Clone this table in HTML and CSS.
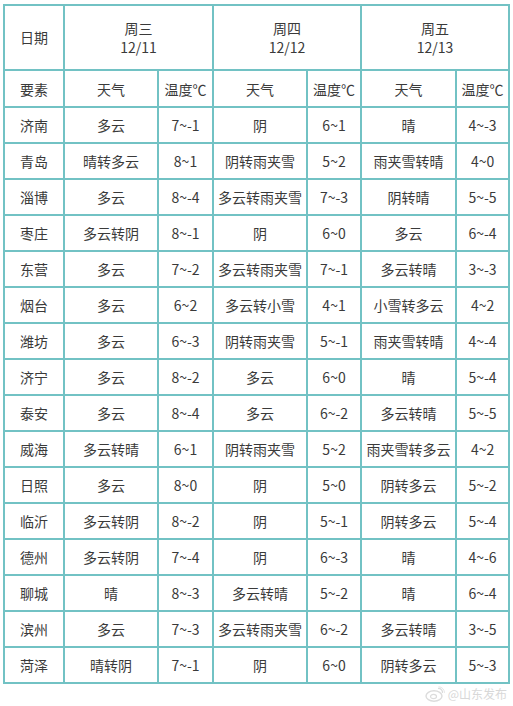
FILE: index.html
```html
<!DOCTYPE html>
<html lang="zh">
<head>
<meta charset="utf-8">
<title>山东天气预报</title>
<link rel="stylesheet" href="styles.css">
</head>
<body>
<div class="page">
<table class="wx">
<colgroup>
<col class="c-city"><col class="c-w"><col class="c-t"><col class="c-w"><col class="c-t2"><col class="c-w2"><col class="c-t3">
</colgroup>
<thead>
<tr class="r-date">
<td>日期</td>
<td colspan="2">周三<br>12/11</td>
<td colspan="2">周四<br>12/12</td>
<td colspan="2">周五<br>12/13</td>
</tr>
<tr class="r-head">
<td>要素</td><td>天气</td><td>温度℃</td><td>天气</td><td>温度℃</td><td>天气</td><td>温度℃</td>
</tr>
</thead>
<tbody>
<tr><td>济南</td><td>多云</td><td>7~-1</td><td>阴</td><td>6~1</td><td>晴</td><td>4~-3</td></tr>
<tr><td>青岛</td><td>晴转多云</td><td>8~1</td><td>阴转雨夹雪</td><td>5~2</td><td>雨夹雪转晴</td><td>4~0</td></tr>
<tr><td>淄博</td><td>多云</td><td>8~-4</td><td>多云转雨夹雪</td><td>7~-3</td><td>阴转晴</td><td>5~-5</td></tr>
<tr><td>枣庄</td><td>多云转阴</td><td>8~-1</td><td>阴</td><td>6~0</td><td>多云</td><td>6~-4</td></tr>
<tr><td>东营</td><td>多云</td><td>7~-2</td><td>多云转雨夹雪</td><td>7~-1</td><td>多云转晴</td><td>3~-3</td></tr>
<tr><td>烟台</td><td>多云</td><td>6~2</td><td>多云转小雪</td><td>4~1</td><td>小雪转多云</td><td>4~2</td></tr>
<tr><td>潍坊</td><td>多云</td><td>6~-3</td><td>阴转雨夹雪</td><td>5~-1</td><td>雨夹雪转晴</td><td>4~-4</td></tr>
<tr><td>济宁</td><td>多云</td><td>8~-2</td><td>多云</td><td>6~0</td><td>晴</td><td>5~-4</td></tr>
<tr><td>泰安</td><td>多云</td><td>8~-4</td><td>多云</td><td>6~-2</td><td>多云转晴</td><td>5~-5</td></tr>
<tr><td>威海</td><td>多云转晴</td><td>6~1</td><td>阴转雨夹雪</td><td>5~2</td><td>雨夹雪转多云</td><td>4~2</td></tr>
<tr><td>日照</td><td>多云</td><td>8~0</td><td>阴</td><td>5~0</td><td>阴转多云</td><td>5~-2</td></tr>
<tr><td>临沂</td><td>多云转阴</td><td>8~-2</td><td>阴</td><td>5~-1</td><td>阴转多云</td><td>5~-4</td></tr>
<tr><td>德州</td><td>多云转阴</td><td>7~-4</td><td>阴</td><td>6~-3</td><td>晴</td><td>4~-6</td></tr>
<tr><td>聊城</td><td>晴</td><td>8~-3</td><td>多云转晴</td><td>5~-2</td><td>晴</td><td>6~-4</td></tr>
<tr><td>滨州</td><td>多云</td><td>7~-3</td><td>多云转雨夹雪</td><td>6~-2</td><td>多云转晴</td><td>3~-5</td></tr>
<tr><td>菏泽</td><td>晴转阴</td><td>7~-1</td><td>阴</td><td>6~0</td><td>阴转多云</td><td>5~-3</td></tr>
</tbody>
</table>
<div class="mark">
<svg class="mark-icon" width="20" height="16" viewBox="0 0 20 16"><ellipse cx="9" cy="10" rx="8" ry="5.2" fill="none" stroke="#dcdcdc" stroke-width="1.4"/><ellipse cx="8.5" cy="10.5" rx="3" ry="2.2" fill="none" stroke="#dcdcdc" stroke-width="1.2"/><path d="M13 2.5a4 4 0 0 1 4.5 4.5" fill="none" stroke="#dcdcdc" stroke-width="1.3"/><path d="M13.5 0.8a6 6 0 0 1 6 6" fill="none" stroke="#e4e4e4" stroke-width="1"/></svg>
<span>@山东发布</span>
</div>
</div>
</body>
</html>
```
FILE: styles.css
```css
html, body {
  margin: 0;
  padding: 0;
  background: #ffffff;
}
.page {
  width: 513px;
  height: 706px;
  padding: 4px 0 0 3px;
  box-sizing: border-box;
  font-family: "Noto Sans CJK SC", "Noto Sans", sans-serif;
  color: #3a3a3a;
}
.wx {
  border-collapse: collapse;
  table-layout: fixed;
  width: 505px;
  font-size: 14px;
}
.c-city { width: 60px; }
.c-w { width: 94px; }
.c-t { width: 55px; }
.c-t2 { width: 54px; }
.c-w2 { width: 95px; }
.c-t3 { width: 53px; }
.wx td {
  border: 2px solid #72c2c4;
  text-align: center;
  vertical-align: middle;
  padding: 0;
  height: 34px;
  line-height: 18px;
  white-space: nowrap;
  overflow: hidden;
}
.wx .r-date td {
  height: 63px;
  line-height: 19px;
}
.wx .r-head td {
  height: 35px;
}
.mark {
  display: flex;
  justify-content: flex-end;
  align-items: center;
  gap: 3px;
  padding-right: 6px;
  margin-top: 1px;
  color: #d8d8d8;
  font-size: 12px;
}
```
